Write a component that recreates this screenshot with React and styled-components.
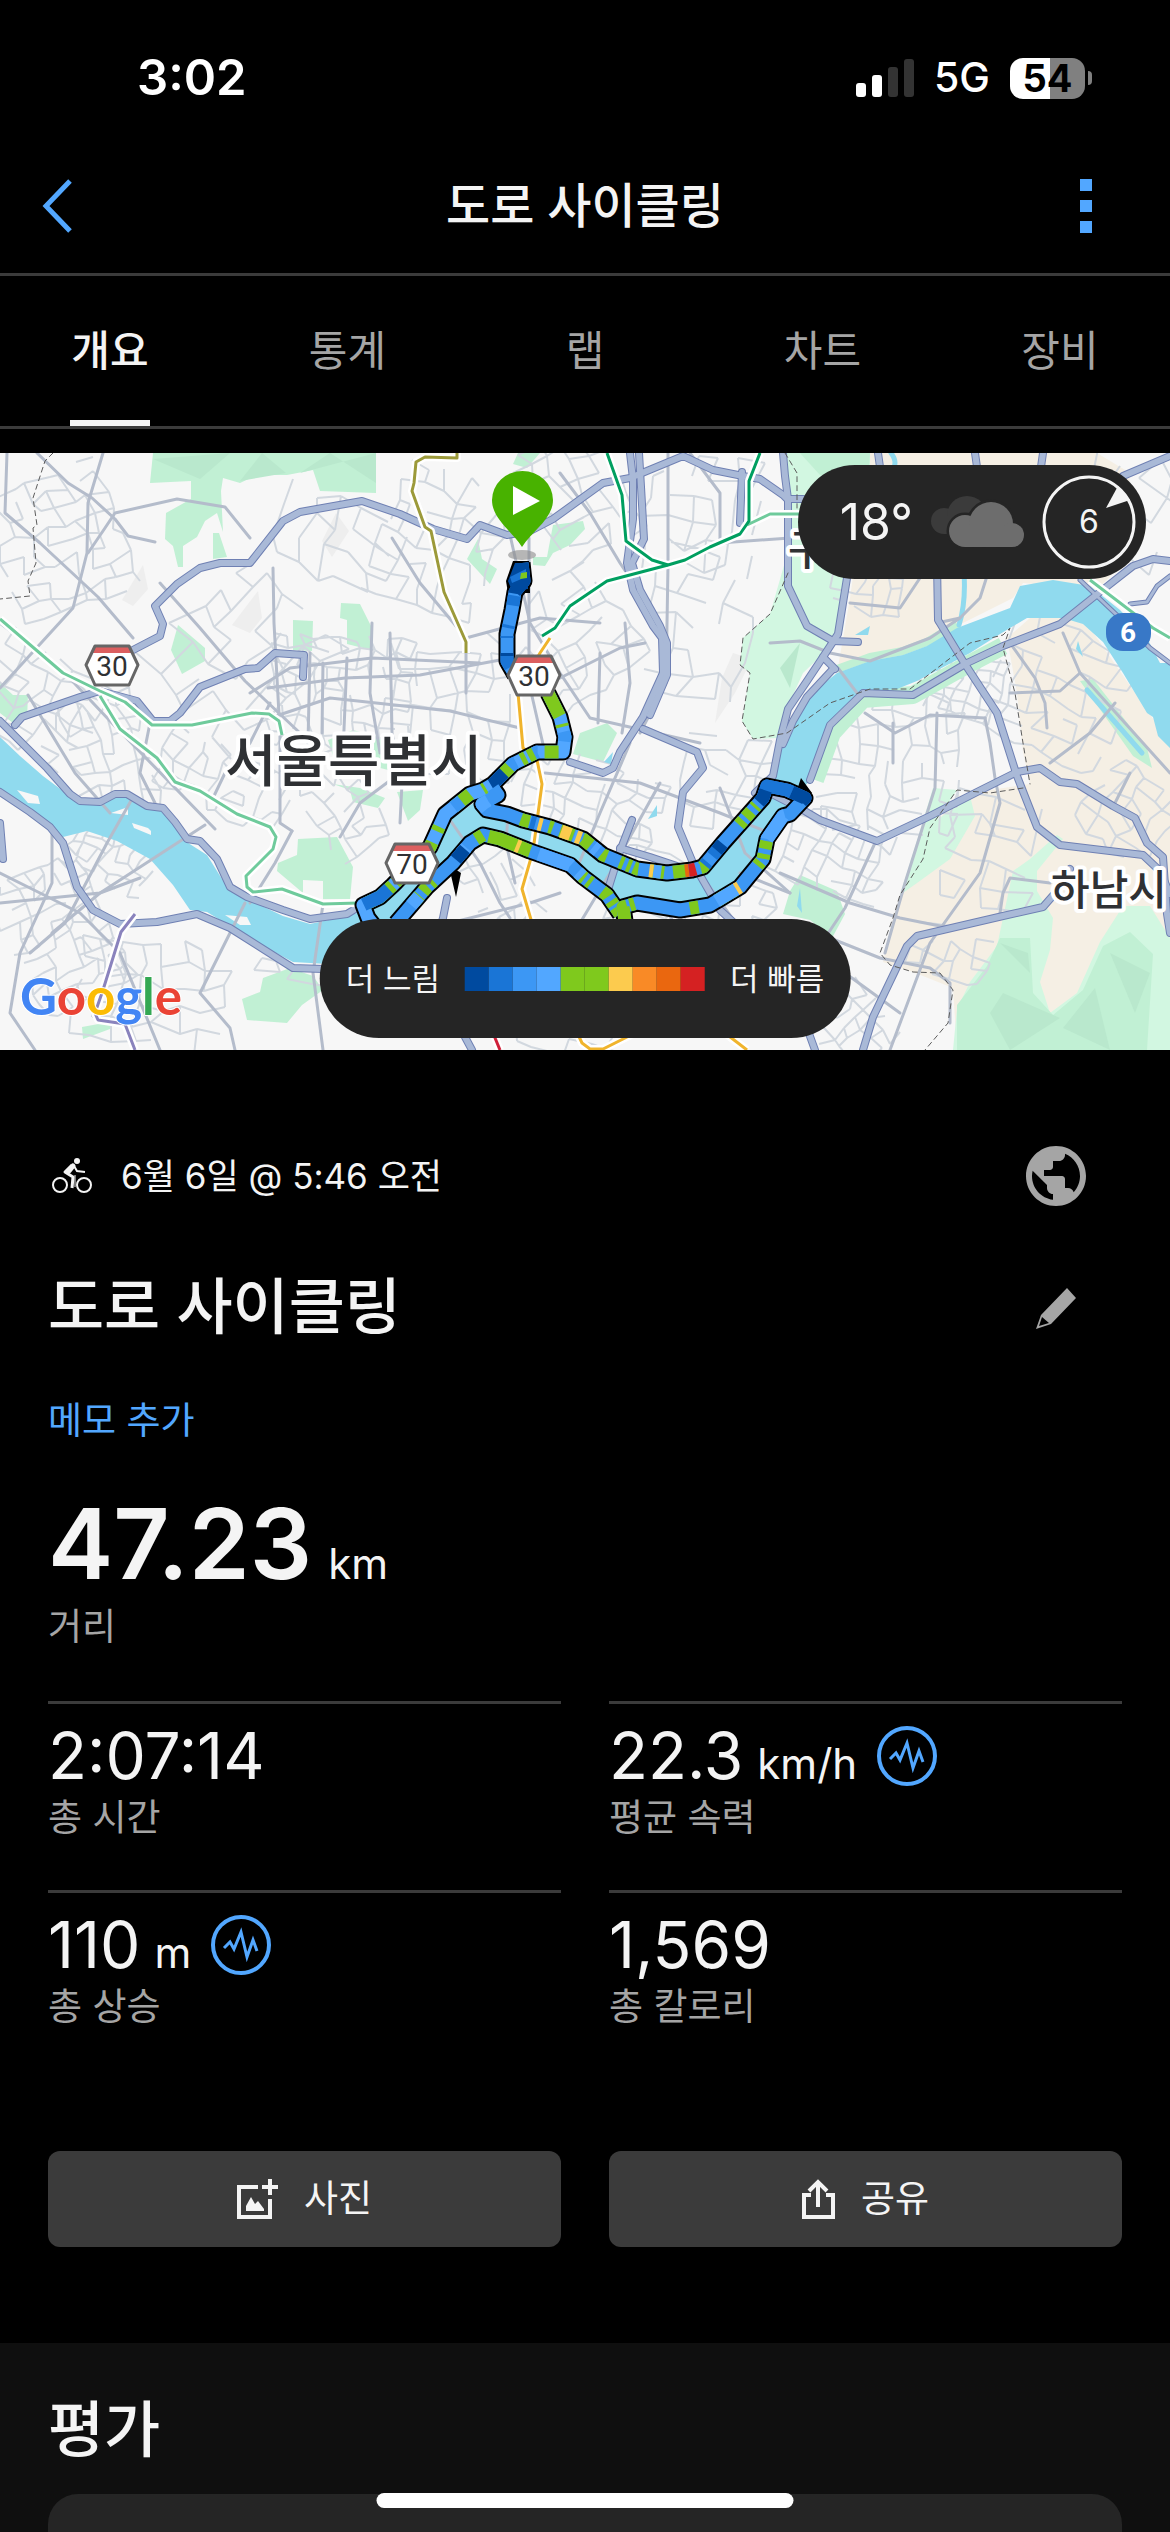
import React, { useState } from 'react';
import styled, { createGlobalStyle } from 'styled-components';
import { MdPublic } from 'react-icons/md';

const GlobalStyle = createGlobalStyle`
  * {
    box-sizing: border-box;
  }
  body {
    margin: 0;
    background-color: #000;
    color: #f4f4f4;
    font-family: 'Inter', 'Noto Sans CJK KR', sans-serif;
    line-height: 1.2;
  }
  button {
    border: 0;
    padding: 0;
    background: none;
    color: inherit;
    font-family: inherit;
    line-height: inherit;
    cursor: pointer;
  }
  svg {
    display: block;
  }
`

const Page = styled.div`
  display: flex;
  flex-direction: column;
  min-height: 100vh;
  overflow: hidden;
`

/* status bar */

const StatusBar = styled.div`
  display: flex;
  align-items: center;
  justify-content: space-between;
  height: 156px;
  padding: 0 78px 0 137px;
  color: #fff;
`

const Clock = styled.span`
  font-size: 49px;
  font-weight: 600;
`

const StatusIcons = styled.div`
  display: flex;
  align-items: center;
  gap: 20px;
`

const Network = styled.span`
  font-size: 41px;
  font-weight: 500;
`

const Battery = styled.div`
  display: flex;
  align-items: center;
  gap: 3px;
`

const BatteryBody = styled.div`
  width: 75px;
  height: 41px;
  border-radius: 13px;
  background: linear-gradient(to right, #fff 54%, #808080 54%);
  color: #000;
  font-size: 38px;
  font-weight: 700;
  line-height: 41px;
  text-align: center;
`

const BatteryTip = styled.div`
  width: 4px;
  height: 14px;
  border-radius: 0 4px 4px 0;
  background-color: #808080;
`

/* header */

const Header = styled.header`
  display: grid;
  grid-template-columns: 84px 1fr 84px;
  align-items: center;
  height: 120px;
  padding: 0 42px 17px;
  border-bottom: 3px solid #3b3b3b;
`

const HeaderTitle = styled.div`
  font-size: 48px;
  font-weight: 500;
  line-height: 60px;
  text-align: center;
`

const IconButton = styled.button`
  display: flex;
  align-items: center;
  justify-content: ${(props) => props.$align || 'center'};
  width: 84px;
  height: 84px;
`

const Tabs = styled.nav`
  display: flex;
  justify-content: space-between;
  padding: 0 70px;
  margin-bottom: 24px;
  border-bottom: 3px solid #3b3b3b;
`

const Tab = styled.button`
  width: 80px;
  height: 150px;
  border-top: 6px solid transparent;
  border-bottom: 6px solid ${(props) => (props.$active ? '#f4f4f4' : 'transparent')};
  color: ${(props) => (props.$active ? '#f4f4f4' : '#a5a5a5')};
  font-size: 42px;
  font-weight: ${(props) => (props.$active ? 500 : 400)};
  white-space: nowrap;
`

/* map */

const MapBox = styled.section`
  position: relative;
  width: 100%;
  aspect-ratio: 1170 / 597;
  overflow: hidden;
`

const MapSvg = styled.svg`
  width: 100%;
  height: 100%;
`

const Weather = styled.div`
  position: absolute;
  top: 12px;
  right: 24px;
  display: flex;
  align-items: center;
  height: 114px;
  padding: 0 10px 0 42px;
  gap: 18px;
  border-radius: 57px;
  background-color: #252525;
`

const Temperature = styled.span`
  font-size: 50px;
`

const Wind = styled.div`
  display: grid;
  place-items: center;
  font-size: 32px;

  > * {
    grid-area: 1 / 1;
  }
`

const Legend = styled.div`
  position: absolute;
  bottom: 12px;
  left: 50%;
  transform: translateX(-50%);
  display: flex;
  align-items: center;
  gap: 25px;
  height: 119px;
  padding: 0 26px;
  border-radius: 60px;
  background-color: #252525;
  font-size: 31px;
  white-space: nowrap;
`

const Scale = styled.div`
  display: flex;
`

const Swatch = styled.div`
  width: 24px;
  height: 24px;
  background-color: ${(props) => props.$color};
`

/* summary */

const Summary = styled.main`
  padding: 78px 48px 96px;
`

const Row = styled.div`
  display: flex;
  align-items: center;
  justify-content: space-between;
  height: 96px;
  margin-bottom: 36px;
  padding-right: 24px;
`

const Meta = styled.div`
  display: flex;
  align-items: center;
  gap: 28px;
  padding-left: 4px;
  font-size: 35px;
`

const Title = styled.h1`
  margin: 0;
  font-size: 61px;
  font-weight: 500;
`

const MemoButton = styled.button`
  display: block;
  margin-top: 41px;
  margin-bottom: 49px;
  color: #52a7ff;
  font-size: 37px;
  line-height: 48px;
`

const Distance = styled.div`
  display: flex;
  align-items: baseline;
  gap: 16px;
  margin-bottom: 9px;
  font-size: 98px;
  font-weight: 600;
  line-height: 100px;
`

const Unit = styled.span`
  font-size: 42px;
  font-weight: 400;
  line-height: 48px;
`

const Label = styled.div`
  color: #a5a5a5;
  font-size: 37px;
  line-height: 48px;
`

const StatGrid = styled.div`
  display: grid;
  grid-template-columns: 1fr 1fr;
  column-gap: 48px;
  margin: 50px 0 72px;
`

const Stat = styled.div`
  padding: 14px 0 48px;
  border-top: 3px solid #3b3b3b;
`

const StatLine = styled.div`
  display: flex;
  align-items: center;
  gap: 20px;
  height: 76px;
`

const StatValue = styled.div`
  display: flex;
  align-items: baseline;
  gap: 14px;
  font-size: 64px;
`

const Actions = styled.div`
  display: grid;
  grid-template-columns: 1fr 1fr;
  column-gap: 48px;
`

const ActionButton = styled.button`
  display: flex;
  align-items: center;
  justify-content: center;
  gap: 26px;
  height: 96px;
  border-radius: 12px;
  background-color: #3b3b3b;
  font-size: 37px;
`

/* rating */

const Rating = styled.section`
  display: flex;
  flex-direction: column;
  flex: 1;
  padding: 51px 48px 0;
  background-color: #0f0f0f;
`

const RatingTitle = styled.h2`
  margin: 0 0 28px;
  font-size: 61px;
  font-weight: 500;
  line-height: 72px;
`

const RatingCard = styled.div`
  flex: 1;
  border-radius: 30px 30px 0 0;
  background-color: #252525;
`

const HomeIndicator = styled.div`
  position: fixed;
  bottom: 24px;
  left: 50%;
  width: 417px;
  height: 15px;
  border-radius: 8px;
  background-color: #fff;
  transform: translateX(-50%);
`

/* map data */

const PARKS = [
  '153,0 150,30 191,28 191,46 166,60 165,86 173,93 178,114 183,114 183,93 197,84 205,68 217,60 223,79 221,38 223,25 240,30 257,22 287,22 313,17 320,38 376,40 376,0',
  '213,80 219,80 227,104 213,106',
  '178,172 205,195 205,208 182,221 171,197',
  '293,167 313,168 312,198 293,197',
  '341,150 360,151 372,175 371,197 347,191 347,167 340,165',
  '0,230 13,242 28,242 27,266 13,270 0,260',
  '298,386 337,384 353,414 350,446 323,446 323,428 303,427 303,440 277,418 278,410 297,402',
  '333,331 360,335 385,345 378,355 353,349 350,337',
  '328,287 353,277 400,290 400,320 333,303',
  '263,525 290,515 313,523 323,537 302,552 287,570 247,567 242,546 260,539',
  '82,574 115,568 110,576 83,586',
  '580,280 607,270 617,280 603,309 573,301',
  '467,106 478,86 482,106 497,116 490,131',
  '553,72 583,68 585,76 570,92 553,100 545,113 533,112 533,104 547,104',
  '518,0 540,0 527,15 513,11',
  '397,339 423,337 420,357 408,368',
  '790,438 800,422 837,438 845,461 832,485 810,467 783,461',
  '1080,228 1093,226 1147,295 1152,315 1133,303',
  '800,0 870,0 868,28 820,22',
];

const MOUNTAINS = ['153,6 200,26 230,0', '240,28 262,0 286,20', '300,20 330,0 376,30 376,0', '780,215 800,190 790,235'];

const MINT = [
  '785,0 870,0 870,10 847,125 843,177 827,197 803,220 783,264 777,285 753,286 742,268 750,220 740,212 743,185 770,161 787,102 785,60',
  '953,597 957,556 970,529 997,493 1013,418 1030,406 1057,382 1063,386 1037,418 1037,438 1053,465 1050,497 1040,529 1050,560 1077,540 1100,489 1123,453 1150,453 1170,485 1170,597',
  '933,335 957,337 937,367 970,343 975,363 950,406 917,430 900,442 920,378',
];

const FOREST = '957,597 957,552 987,513 1000,485 1030,485 1033,540 1053,562 1083,537 1103,493 1130,479 1153,501 1147,597';

const RIDGES = ['1003,540 1060,565 1010,597 990,560', '1063,575 1095,535 1110,597', '1110,500 1150,520 1135,560', '1000,490 1028,500 1030,520'];

const GREY_PATCHES = ['143,112 148,136 133,153 122,147', '258,138 262,165 250,180 232,172', '336,60 349,78 332,104 322,88', '733,200 752,206 735,240 715,270 722,225'];

const BEIGE = [
  '870,0 850,145 837,220 903,202 957,173 1013,145 1023,130 1097,137 1123,110 1130,20 1097,0',
  '1007,185 1017,240 1023,299 1030,331 990,337 957,343 927,382 923,406 900,442 893,465 883,509 913,519 953,535 957,597 1170,597 1170,290 1083,165 1030,165',
];

const RIVER =
  '0,284 20,303 43,323 67,341 83,349 100,351 113,339 133,345 163,357 185,388 207,402 227,434 247,446 283,463 310,471 347,463 360,459 427,398 450,367 483,343 500,357 540,378 587,394 623,414 667,424 700,418 737,378 767,343 773,315 787,280 807,244 837,220 870,208 903,202 927,193 957,175 1010,155 1020,133 1053,127 1090,133 1120,157 1147,185 1160,210 1170,210 1170,295 1158,283 1153,264 1147,260 1123,220 1103,189 1083,171 1063,165 1027,165 1000,181 970,200 917,228 897,236 863,238 837,260 823,287 810,327 787,355 767,386 750,426 710,452 673,457 627,452 617,453 590,426 570,414 530,400 487,382 463,398 430,438 400,465 380,500 345,512 293,509 263,493 230,473 207,459 190,457 173,432 150,406 117,388 87,378 63,384 37,361 0,337';

const ISLANDS = ['17,337 38,343 40,351 28,350', '111,360 128,354 128,362', '132,370 148,375 151,378 151,382 134,375', '225,462 247,464 251,472 240,472'];

const ARTERIALS = [
  '103,0 88,50 87,100 73,155 0,235',
  '37,0 68,30 92,45 115,66 128,83 155,89',
  '7,0 5,60 40,90 98,144 133,185',
  '88,100 105,75 115,60 177,46 225,54 250,85',
  '160,130 200,175 245,228 300,280',
  '0,170 60,215 110,268 215,376',
  '28,242 75,320 110,360',
  '150,270 140,320 155,350',
  '132,346 107,390 65,470 30,500',
  '205,372 100,440 52,480',
  '245,450 200,540 230,575 235,597',
  '323,451 313,520 323,597',
  '0,420 40,440 80,460 120,500 160,597',
  '52,375 52,430 20,500 10,560 35,597',
  '0,450 100,440 140,425',
  '250,240 290,215 372,205 480,210',
  '268,235 345,225 420,222 500,207',
  '270,265 330,245 450,258 520,275',
  '273,115 274,170 280,280 280,370 292,378',
  '310,200 308,290',
  '323,210 322,280',
  '347,205 343,300',
  '372,170 370,240 380,300',
  '390,180 392,280 402,330 400,370',
  '213,345 225,320 250,290 270,250',
  '292,378 275,410 250,450',
  '340,384 360,350 400,320',
  '392,85 420,130 466,185',
  '466,185 540,165 600,170',
  '466,189 466,240',
  '510,82 530,170 560,220 590,265 700,290',
  '529,85 529,230 545,300',
  '560,20 590,60 620,110 640,140',
  '560,225 620,195 645,190',
  '600,200 598,270',
  '625,170 630,230 622,280',
  '668,0 668,112 666,230 640,280',
  '690,0 720,40 720,90 790,85',
  '545,320 640,330 720,360 770,380',
  '660,330 610,420 580,470',
  '630,290 600,360 575,420',
  '450,367 480,410 500,450 510,465',
  '508,362 506,390 515,430',
  '700,420 750,490',
  '720,335 745,400 790,440',
  '560,440 530,450 450,470',
  '665,455 680,480',
  '780,420 850,450 900,465 950,475',
  '937,260 935,335 905,430 885,500',
  '875,390 845,455 815,500',
  '865,260 895,280 930,262 985,265',
  '893,270 893,310',
  '985,265 990,290 995,325 1000,350 980,420 930,490 890,597',
  '937,170 960,165 980,145 988,120',
  '850,150 900,155 920,125',
  '770,190 800,188 830,200 870,208 930,185 960,165',
  '1010,190 1035,225 1045,250 1047,275',
  '1063,180 1080,220 1060,238 1010,240',
  '1080,220 1170,320',
  '1050,310 1090,280 1115,250',
  '1130,320 1115,350',
  '1000,460 1003,440 1010,425 1050,430',
  '830,485 880,505 930,515 950,530 950,570',
  '845,520 900,560',
  '838,215 857,240',
  '740,420 790,440',
];

const HIGHWAYS = [
  '133,197 160,183 163,171 155,153 177,131 200,115 220,110 250,110 283,68 300,59 362,48 400,61 433,76 467,86 480,72 507,82 530,78 553,66 603,30 630,25 683,3 713,17 743,23 760,26 783,42 787,46 803,46',
  '15,272 22,264 80,244 100,238 137,248 153,268 170,268 180,260 200,234 245,216 258,215 275,200 304,202 303,224',
  '0,268 47,315 70,341 80,348 100,349 115,341 127,341 147,353 163,355 175,369 187,386 200,388 217,406 230,434 247,444 283,457 310,466 347,461 360,453',
  '0,339 30,359 50,374 63,390 77,434 93,457 120,471 157,469 197,461 230,475 293,515 323,516 345,516',
  '0,370 3,406',
  '630,0 633,26 633,66 627,110 633,137 653,173 662,185 663,220 643,264 620,299 613,315 603,320 570,309',
  '639,0 641,34 644,86 632,110 640,137 660,173 667,190 667,222 650,262',
  '643,276 697,299 703,315 683,339 678,374 693,410 720,457 745,480',
  '632,367 620,398 607,440',
  '620,395 650,404 680,414',
  '742,19 740,70',
  '783,0 785,23 788,46 788,133 807,173 833,188 858,189',
  '847,125 838,181 823,204 807,228 788,256 780,287 773,323 755,340',
  '833,216 807,244 793,268 783,291',
  '823,204 835,216',
  '937,110 938,167 963,208 997,260 1017,323 1037,374 1060,392 1143,402 1160,418 1170,441',
  '810,327 830,272 863,240 913,242 967,210 1003,193 1060,171 1100,139 1133,113 1153,106 1170,108',
  '770,340 803,357 820,367 877,388 930,363 977,339 1017,319 1040,315 1060,329 1077,331 1113,353 1135,365 1147,390 1163,404 1167,461 1170,480',
  '863,597 873,564 907,493 917,483 1003,463 1043,454 1057,438 1070,416',
  '1123,23 1170,3',
  '447,445 443,465 435,490',
  '465,584 472,597',
  '807,575 815,597',
  '878,0 880,14',
  '975,0 977,14',
  '1043,0 1041,14',
];

const THIN_HIGHWAYS = ['1130,151 1147,149 1157,133 1170,123', '1080,127 1120,165 1150,195 1170,210'];

const RAILS = [
  { color: '#6fcb9c', points: '0,166 63,220 100,238 125,249 152,272 192,272 252,260 269,261 279,268 282,282' },
  {
    color: '#6fcb9c',
    points: '100,243 120,276 157,305 175,329 200,338 237,361 270,374 276,384 273,396 246,423 247,434 253,439 282,436 323,451 358,450',
  },
  { color: '#6fcb9c', points: '747,72 770,61 805,61' },
  { color: '#6fcb9c', points: '1090,127 1153,175 1170,185' },
  { color: '#009f60', points: '607,0 622,42 626,88 652,107 668,112' },
  { color: '#f0b42c', points: '550,185 540,200 518,240 523,295 537,307 542,331 533,398 522,436 532,470' },
  { color: '#009f60', points: '542,183 555,175 570,153 607,128 668,112 685,107 710,94 740,81 749,68 749,28 760,0' },
  { color: '#9c9a3a', points: '457,0 457,5 425,4 416,9 414,30 412,38 425,74 431,78 444,139 466,189 466,200' },
  { color: '#f0b42c', points: '575,575 582,590 590,596 603,596 635,580' },
  { color: '#f0b42c', points: '725,580 747,597' },
  { color: '#d0203a', points: '493,580 500,597' },
  { color: '#8a83bd', points: '135,461 121,479 103,537 95,560 98,567 125,571 135,597' },
];

const BORDERS = [
  '53,0 45,8 33,45 37,72 33,75 36,110 28,128 30,143 0,146',
  '785,0 797,20 797,55',
  '788,120 770,161 743,185 740,212 750,220 742,268 753,286 787,280 830,250 870,236 910,236 970,190 1003,182 1010,175 1003,195 1015,240 1023,290 1030,331',
  '1023,335 990,340 957,337 930,375 923,406 900,442 893,465 880,500 890,512 913,519 940,520 953,537 948,570 925,597',
];

// every layer is a list of dash lengths painted over the base colour
const TRACK = [
  {
    points: '522,110 524,128 515,139 512,157 507,181 507,208 515,222',
    base: '#3c97f4',
    layers: [
      ['#004a9f', '34 60 3 90'],
      ['#1a75d6', '0 36 10 20 3 8 2 18 12 90'],
    ],
  },
  {
    points: '548,240 560,264 565,284 563,299 537,299 513,311 493,331 483,337 470,341 445,361 430,394 393,432 380,444 363,452 368,465 375,474',
    base: '#52a7ff',
    layers: [
      ['#7fc91d', '26 8 3 30 14 10 7 3 5 12 12 22 3 14 20 26 5 12 8 6 30 6 5 4 20 4 8 200'],
      ['#3c97f4', '0 42 10 36 4 20 8 60 10 200'],
      ['#004a9f', '0 128 18 400'],
      ['#1a75d6', '0 296 30 400'],
    ],
  },
  {
    points: '620,461 607,442 583,424 570,412 530,398 500,386 483,382 470,390 453,410 427,434 396,470',
    base: '#3c97f4',
    layers: [
      ['#7fc91d', '8 3 5 5 8 14 4 4 8 54 24 0 20 6 8 60 4 4 7 5 9 200'],
      ['#52a7ff', '0 54 6 10 34 80 8 60 12 200'],
      ['#fccb4e', '0 124 4 200'],
      ['#004a9f', '0 186 14 400'],
    ],
  },
  {
    points:
      '493,335 498,342 482,351 487,357 507,361 523,367 550,374 583,386 603,402 637,416 667,420 692,417 703,414 723,390 763,345 767,333 787,337 805,345 790,361 783,363 767,386 763,406 740,434 710,452 680,457 637,450 623,454 625,468',
    base: '#3c97f4',
    layers: [
      [
        '#7fc91d',
        '0 70 9 20 4 8 14 10 10 14 6 14 4 4 4 3 5 12 14 9 14 14 8 50 6 4 8 5 3 122 8 5 5 4 5 34 5 3 12 20 9 56 5 3 20 300',
      ],
      ['#52a7ff', '0 20 14 92 4 18 6 60 8 214 30 60 24 400'],
      ['#fccb4e', '0 88 4 20 10 6 5 77 4 309 4 400'],
      ['#ea670f', '0 246 4 400'],
      ['#d52122', '0 250 7 400'],
      ['#1a75d6', '0 80 5 182 4 8 14 60 41 400'],
      ['#004a9f', '0 286 9 55 14 30 20 400'],
    ],
  },
];

const STREET_BLOCKS = [
  [60, 90, 130, 110, 70, 17],
  [40, 250, 110, 90, 32, 16],
  [110, 300, 120, 70, 75, 15],
  [225, 330, 130, 60, 28, 15],
  [60, 480, 130, 90, 64, 14],
  [150, 540, 140, 90, 6, 21],
  [110, 405, 80, 40, 28, 12],
  [240, 200, 130, 150, 48, 26],
  [340, 240, 140, 110, 4, 14],
  [340, 90, 110, 60, 22, 25],
  [340, 350, 100, 60, 60, 15],
  [440, 90, 110, 120, 22, 19],
  [450, 260, 120, 110, 5, 20],
  [575, 40, 120, 80, 60, 18],
  [570, 190, 110, 110, 55, 19],
  [700, 60, 100, 100, 5, 22],
  [700, 170, 90, 150, 13, 25],
  [585, 345, 140, 70, 18, 15],
  [730, 330, 90, 80, 12, 18],
  [500, 440, 130, 60, 60, 15],
  [600, 590, 700, 30, 15, 18],
  [690, 450, 150, 80, 18, 16],
  [890, 310, 130, 120, 4, 17],
  [830, 400, 110, 70, 20, 15],
  [840, 560, 110, 70, 50, 14],
  [960, 230, 70, 60, 20, 13],
  [1060, 240, 110, 120, 22, 18],
  [1130, 360, 80, 80, 40, 16],
  [990, 400, 80, 90, 12, 22],
  [950, 500, 70, 40, 20, 15],
  [870, 130, 60, 50, 15, 14],
  [1130, 50, 80, 90, 30, 24],
];

function streetPath([cx, cy, width, height, angle, step], seed) {
  let state = seed * 7919 + 13;
  const random = () => {
    state = (state * 16807) % 2147483647;
    return state / 2147483647;
  };
  random();
  const rad = (angle * Math.PI) / 180;
  const cols = Math.ceil(width / step);
  const rows = Math.ceil(height / step);
  const nodes = [];
  for (let r = 0; r <= rows; r += 1) {
    nodes.push([]);
    for (let c = 0; c <= cols; c += 1) {
      const u = (c - cols / 2 + (random() - 0.5) * 0.6) * step;
      const v = (r - rows / 2 + (random() - 0.5) * 0.6) * step;
      nodes[r].push([
        Math.round(cx + u * Math.cos(rad) - v * Math.sin(rad)),
        Math.round(cy + u * Math.sin(rad) + v * Math.cos(rad)),
      ]);
    }
  }
  let d = '';
  for (let r = 0; r <= rows; r += 1) {
    for (let c = 0; c <= cols; c += 1) {
      if (c < cols && random() > 0.34) d += `M${nodes[r][c]}L${nodes[r][c + 1]}`;
      if (r < rows && random() > 0.34) d += `M${nodes[r][c]}L${nodes[r + 1][c]}`;
    }
  }
  return d;
}

const STREETS = STREET_BLOCKS.map((block, i) => streetPath(block, i + 1)).join('');

const MapLabel = styled.text`
  fill: #2f3134;
  stroke: #fff;
  stroke-width: 8px;
  stroke-linejoin: round;
  paint-order: stroke;
  font-family: 'Noto Sans CJK KR', sans-serif;
  font-weight: 500;
`

const ShieldText = styled.text`
  font-family: 'Roboto', sans-serif;
  font-size: 28px;
  text-anchor: middle;
`

const GoogleText = styled.text`
  font-family: 'Lato', sans-serif;
  font-size: 51px;
  font-weight: 700;
  stroke: #fff;
  stroke-width: 2px;
  stroke-linejoin: round;
  paint-order: stroke;
`

const Polygons = ({ list, fill }) => list.map((points) => <polygon key={points} points={points} fill={fill} />);

const Lines = ({ list, ...rest }) => list.map((points) => <polyline key={points} points={points} {...rest} />);

const RoadShield = ({ x, y, number }) => (
  <g transform={`translate(${x} ${y})`}>
    <path d="M11 2H45L54 21L45 41H11L2 21Z" fill="#fff" />
    <path d="M11 2H45L48 9H8Z" fill="#dc5f5f" />
    <path d="M11 2H45L54 21L45 41H11L2 21Z" fill="none" stroke="#666" strokeWidth="3" strokeLinejoin="round" />
    <ShieldText x="28" y="32" fill="#2f3134">{number}</ShieldText>
  </g>
);

const RideMap = () => (
  <MapSvg viewBox="0 0 1170 597" preserveAspectRatio="xMidYMid slice" role="img" aria-label="서울특별시 지도">
    <rect width="1170" height="597" fill="#f7f7f7" />
    <Polygons list={GREY_PATCHES} fill="#eeeeee" />
    <Polygons list={BEIGE} fill="#f5efe4" />
    <Polygons list={MINT} fill="#d2f7e1" />
    <Polygons list={PARKS} fill="#c1f0d4" />
    <polygon points={FOREST} fill="#c1f0d4" />
    <Polygons list={MOUNTAINS} fill="#b9e8cd" />
    <Polygons list={RIDGES} fill="#b9e8cd" />
    <g fill="none" strokeLinejoin="round">
      <path d={STREETS} stroke="#d2d8df" strokeWidth="2" />
      <polyline points="837,216 870,204 903,198 927,189 957,171" stroke="#c1f0d4" strokeWidth="8" />
      <polyline points="815,327 832,280 863,246 913,242 967,212 1003,193" stroke="#c1f0d4" strokeWidth="18" />
    </g>
    <polygon points={RIVER} fill="#90daee" />
    <Polygons list={ISLANDS} fill="#f7f7f7" />
    <Polygons list={['648,366 657,352 657,363', '604,309 613,299 611,311', '797,453 800,435 802,460', '855,182 870,173 868,182', '1078,188 1083,204 1076,196']} fill="#90daee" />
    <g fill="none" strokeLinejoin="round" strokeLinecap="round">
      <path d="M1087 237L1142 300" stroke="#90daee" strokeWidth="5" />
      <path d="M891 0Q897 8 894 14M964 120Q966 150 959 172" stroke="#90daee" strokeWidth="5" />
      <Lines list={ARTERIALS} stroke="#b4bccb" strokeWidth="3" />
      <Lines list={HIGHWAYS} stroke="#6f80b3" strokeWidth="8" />
      <Lines list={THIN_HIGHWAYS} stroke="#6f80b3" strokeWidth="5" />
      <Lines list={HIGHWAYS} stroke="#a9b9d7" strokeWidth="6" />
      <Lines list={THIN_HIGHWAYS} stroke="#a9b9d7" strokeWidth="3" />
      <Lines list={BORDERS} stroke="#5c5c5c" strokeWidth="1" strokeDasharray="5 4" />
    </g>
    <g fill="none" strokeLinejoin="round">
      {RAILS.map((rail) => <polyline key={`c${rail.points}`} points={rail.points} stroke="#fff" strokeWidth="8" />)}
      {RAILS.map((rail) => <polyline key={rail.points} points={rail.points} stroke={rail.color} strokeWidth="3" />)}
    </g>

    <MapLabel x="225" y="328" fontSize="56">서울특별시</MapLabel>
    <MapLabel x="1051" y="452" fontSize="42">하남시</MapLabel>
    <MapLabel x="788" y="112" fontSize="42">구</MapLabel>

    <ellipse cx="522" cy="102" rx="14" ry="5" fill="#8a8a8a" opacity="0.6" />
    <g fill="none" strokeLinejoin="round">
      <path d="M493 319L484 336L502 343ZM455 395L449 412L461 420L456 444L450 418ZM801 325L796 340H812Z" fill="#000" />
      {TRACK.map((part) => <polyline key={`c${part.points}`} points={part.points} stroke="#000" strokeWidth="17" />)}
      <path d="M513 108H529L530 140H508L506 128Z" fill="#000" />
      {TRACK.map((part) => (
        <g key={part.points} strokeWidth="13">
          <polyline points={part.points} stroke={part.base} />
          {part.layers.map(([color, dash]) => (
            <polyline key={color} points={part.points} stroke={color} strokeDasharray={dash} />
          ))}
        </g>
      ))}
      <path d="M515 110H528V136L512 138L508 128Z" fill="#004a9f" />
      <path d="M510 124L526 116V124L512 130Z" fill="#1a75d6" />
      <path d="M521 120L527 119V125L520 126Z" fill="#7fc91d" />
    </g>

    <RoadShield x={84} y={191} number="30" />
    <RoadShield x={506} y={201} number="30" />
    <RoadShield x={384} y={389} number="70" />
    <rect x="1106" y="160" width="45" height="38" rx="17" fill="#3878c7" />
    <ShieldText x="1128" y="189" fill="#fff" fontWeight="700">6</ShieldText>

    <path d="M522 94C512 78 492 66 492 47A30.500 29 0 0 1 553 47C553 66 532 78 522 94Z" fill="#48b200" />
    <path d="M513 33L540 48L513 62Z" fill="#fff" />

    <GoogleText x="20" y="562">
      <tspan fill="#4285f4">G</tspan>
      <tspan fill="#ea4335">o</tspan>
      <tspan fill="#fbbc05">o</tspan>
      <tspan fill="#4285f4">g</tspan>
      <tspan fill="#34a853">l</tspan>
      <tspan fill="#ea4335">e</tspan>
    </GoogleText>
  </MapSvg>
);

/* icons */

const SignalIcon = () => (
  <svg width="58" height="38" viewBox="0 0 58 38">
    <rect x="0" y="24" width="10" height="14" rx="3" fill="#fff" />
    <rect x="16" y="16" width="10" height="22" rx="3" fill="#fff" />
    <rect x="32" y="8" width="10" height="30" rx="3" fill="#333" />
    <rect x="48" y="0" width="10" height="38" rx="3" fill="#333" />
  </svg>
);

const BackIcon = () => (
  <svg width="32" height="54" viewBox="0 0 32 54" fill="none" stroke="#52a7ff" strokeWidth="5">
    <path d="M28 2L4 27L28 52" />
  </svg>
);

const MoreIcon = () => (
  <svg width="12" height="54" viewBox="0 0 12 54" fill="#52a7ff">
    <path d="M0 0H12V12H0ZM0 21H12V33H0ZM0 42H12V54H0Z" />
  </svg>
);

const CloudIcon = () => (
  <svg width="93" height="52" viewBox="0 0 93 52">
    <g fill="#3b3b3b">
      <circle cx="13" cy="25" r="13" />
      <circle cx="36" cy="20" r="20" />
      <path d="M13 20H40V38H13Z" />
    </g>
    <g stroke="#252525" strokeWidth="5">
      <circle cx="34" cy="35" r="16" />
      <circle cx="60" cy="28" r="22" />
    </g>
    <g fill="#6d6d6d">
      <circle cx="34" cy="35" r="16" />
      <circle cx="60" cy="28" r="22" />
      <circle cx="81" cy="39" r="12" />
      <path d="M34 30H81V51H34Z" />
    </g>
  </svg>
);

const WindIcon = () => (
  <svg width="94" height="94" viewBox="0 0 94 94">
    <circle cx="47" cy="47" r="45" fill="none" stroke="#f4f4f4" strokeWidth="3" />
    <path d="M76 11L88 25L64 33Z" fill="#f4f4f4" />
  </svg>
);

const CyclingIcon = () => (
  <svg width="41" height="36" viewBox="0 0 41 36" fill="none" stroke="#f4f4f4">
    <circle cx="8" cy="27" r="7" strokeWidth="2" />
    <circle cx="32" cy="27" r="7" strokeWidth="2" />
    <circle cx="25" cy="3" r="3" fill="#f4f4f4" stroke="none" />
    <path d="M20 7L13 14L21 19L20 30" strokeWidth="3" strokeLinejoin="round" />
    <path d="M21 8L17 13" strokeWidth="5" strokeLinecap="round" />
    <path d="M22 8L25 13L33 14" strokeWidth="2" />
    <path d="M23 17V29" strokeWidth="1" />
  </svg>
);

const PencilIcon = () => (
  <svg width="40" height="41" viewBox="0 0 40 41">
    <path fill="#a5a5a5" fillRule="evenodd" d="M31 0L40 10L15 36L0 41L5 27ZM6 29L3 38L13 35Z" />
  </svg>
);

const PulseIcon = () => (
  <svg width="60" height="60" viewBox="0 0 60 60" fill="none" stroke="#52a7ff">
    <circle cx="30" cy="30" r="28" strokeWidth="4" />
    <path d="M13 33L19 27L23 34L30 17L36 42L42 25L46 36" strokeWidth="3" />
  </svg>
);

const PhotoIcon = () => (
  <svg width="41" height="40" viewBox="0 0 41 40" fill="none" stroke="#f4f4f4" strokeWidth="4">
    <path d="M21 8H2V38H33V20M33 0V16M25 8H41" />
    <path d="M9 32V27L14 18L18 25L21 22L27 30V32Z" fill="#f4f4f4" stroke="none" />
  </svg>
);

const ShareIcon = () => (
  <svg width="33" height="40" viewBox="0 0 33 40" fill="none" stroke="#f4f4f4" strokeWidth="4">
    <path d="M9 16H2V38H31V16H24M16 5V28" />
    <path d="M7 12L16 3L25 12" />
  </svg>
);

/* screen */

const TABS = ['개요', '통계', '랩', '차트', '장비'];

const SPEED_COLORS = ['#004a9f', '#1a75d6', '#3c97f4', '#52a7ff', '#7fc91d', '#7fc91d', '#fccb4e', '#f98a26', '#ea670f', '#d52122'];

const STATS = [
  { value: '2:07:14', label: '총 시간' },
  { value: '22.3', unit: 'km/h', label: '평균 속력', chart: true },
  { value: '110', unit: 'm', label: '총 상승', chart: true },
  { value: '1,569', label: '총 칼로리' },
];

const StatItem = ({ stat }) => (
  <Stat>
    <StatLine>
      <StatValue>
        {stat.value}
        {stat.unit && <Unit>{stat.unit}</Unit>}
      </StatValue>
      {stat.chart && <button type="button" aria-label={`${stat.label} 차트`}><PulseIcon /></button>}
    </StatLine>
    <Label>{stat.label}</Label>
  </Stat>
);

export default function App() {
  const [activeTab, setActiveTab] = useState('개요');

  return (
    <Page>
      <GlobalStyle />
      <StatusBar>
        <Clock>3:02</Clock>
        <StatusIcons>
          <SignalIcon />
          <Network>5G</Network>
          <Battery>
            <BatteryBody>54</BatteryBody>
            <BatteryTip />
          </Battery>
        </StatusIcons>
      </StatusBar>

      <Header>
        <IconButton type="button" $align="flex-start" aria-label="뒤로"><BackIcon /></IconButton>
        <HeaderTitle>도로 사이클링</HeaderTitle>
        <IconButton type="button" aria-label="더 보기"><MoreIcon /></IconButton>
      </Header>

      <Tabs>
        {TABS.map((tab) => (
          <Tab key={tab} type="button" $active={tab === activeTab} onClick={() => setActiveTab(tab)}>
            {tab}
          </Tab>
        ))}
      </Tabs>

      <MapBox>
        <RideMap />
        <Weather>
          <Temperature>18°</Temperature>
          <CloudIcon />
          <Wind>
            <WindIcon />
            <span>6</span>
          </Wind>
        </Weather>
        <Legend>
          <span>더 느림</span>
          <Scale>
            {SPEED_COLORS.map((color, i) => <Swatch key={i} $color={color} />)}
          </Scale>
          <span>더 빠름</span>
        </Legend>
      </MapBox>

      <Summary>
        <Row>
          <Meta>
            <CyclingIcon />
            <span>6월 6일 @ 5:46 오전</span>
          </Meta>
          <IconButton type="button" aria-label="공개 범위"><MdPublic size={72} color="#a5a5a5" /></IconButton>
        </Row>
        <Row>
          <Title>도로 사이클링</Title>
          <IconButton type="button" aria-label="이름 편집"><PencilIcon /></IconButton>
        </Row>
        <MemoButton type="button">메모 추가</MemoButton>
        <Distance>
          47.23
          <Unit>km</Unit>
        </Distance>
        <Label>거리</Label>

        <StatGrid>
          {STATS.map((stat) => <StatItem key={stat.label} stat={stat} />)}
        </StatGrid>

        <Actions>
          <ActionButton type="button">
            <PhotoIcon />
            사진
          </ActionButton>
          <ActionButton type="button">
            <ShareIcon />
            공유
          </ActionButton>
        </Actions>
      </Summary>

      <Rating>
        <RatingTitle>평가</RatingTitle>
        <RatingCard />
      </Rating>
      <HomeIndicator />
    </Page>
  );
}
